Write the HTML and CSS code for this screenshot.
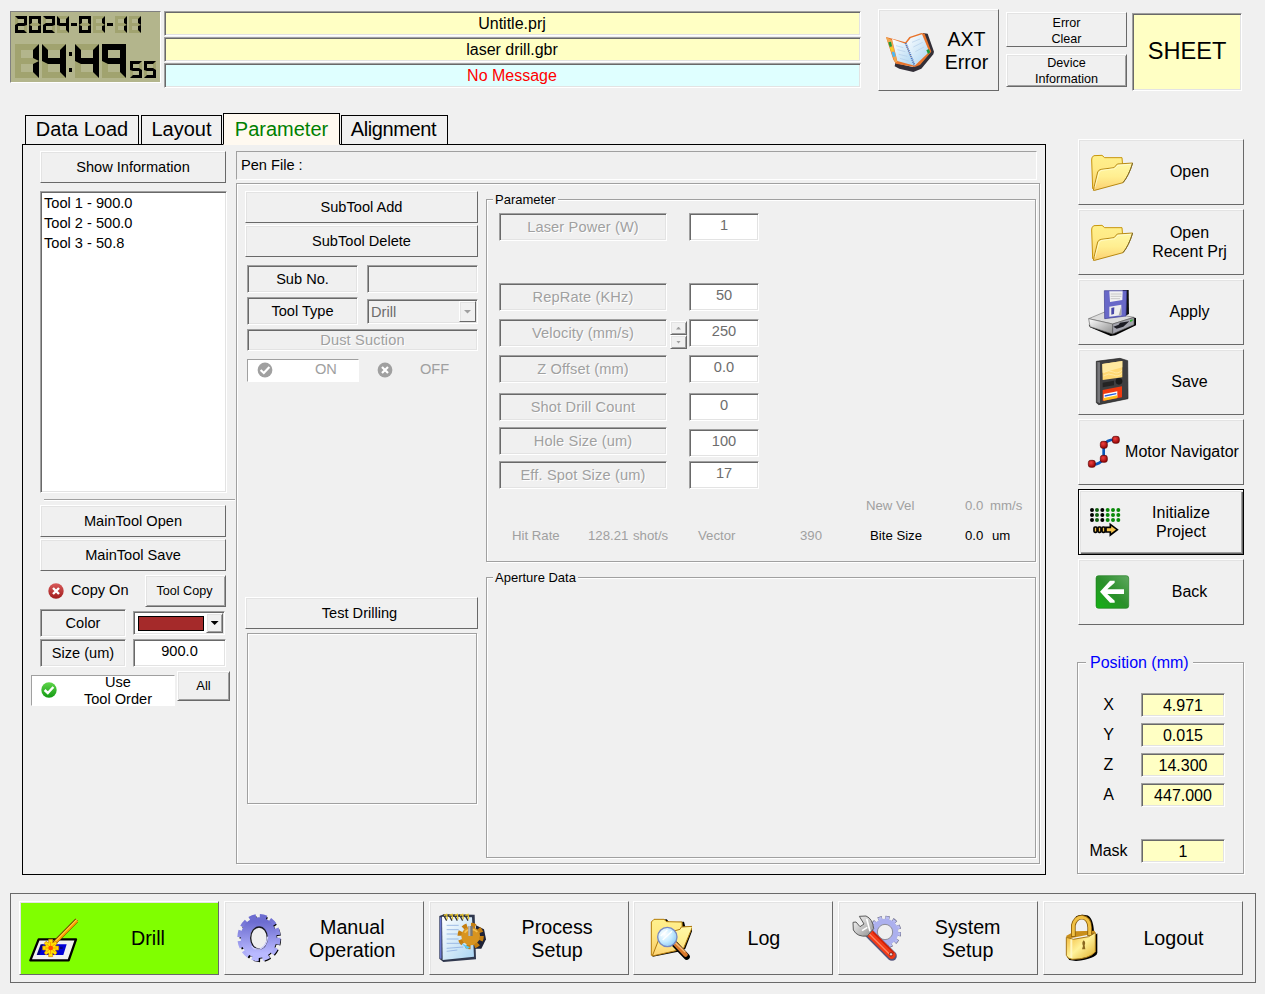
FILE: index.html
```html
<!DOCTYPE html>
<html lang="en">
<head>
<meta charset="utf-8">
<title>Laser Drill</title>
<link rel="stylesheet" href="styles.css">
</head>
<body>
<svg class="defs" width="0" height="0" aria-hidden="true">
  <defs>
    <linearGradient id="folderBack" x1="0" y1="0" x2="0" y2="1"><stop offset="0" stop-color="#fff08c"/><stop offset=".4" stop-color="#ffe985"/><stop offset="1" stop-color="#f9cc66"/></linearGradient>
    <linearGradient id="folderFront" x1="0" y1="0" x2="0" y2="1"><stop offset="0" stop-color="#fff8a8"/><stop offset=".5" stop-color="#ffee90"/><stop offset="1" stop-color="#fdd070"/></linearGradient>
    <linearGradient id="gearFill" x1="0" y1="0" x2="0" y2="1"><stop offset="0" stop-color="#6c6cd0"/><stop offset="1" stop-color="#b9b9ff"/></linearGradient>
    <linearGradient id="steel" x1="0" y1="0" x2="1" y2="1"><stop offset="0" stop-color="#ffffff"/><stop offset="1" stop-color="#8c8c8c"/></linearGradient>
    <linearGradient id="gold" x1="0" y1="0" x2="1" y2="1"><stop offset="0" stop-color="#f0b02c"/><stop offset=".5" stop-color="#fff29a"/><stop offset="1" stop-color="#e0ae28"/></linearGradient>
    <linearGradient id="page" x1="0" y1="0" x2="1" y2="1"><stop offset="0" stop-color="#ffffff"/><stop offset="1" stop-color="#a9d4f2"/></linearGradient>
    <linearGradient id="green" x1="0" y1="1" x2="1" y2="0"><stop offset="0" stop-color="#12b312"/><stop offset=".5" stop-color="#2b8f2b"/><stop offset="1" stop-color="#5fa860"/></linearGradient>
    <radialGradient id="ball" cx=".4" cy=".35" r=".7"><stop offset="0" stop-color="#f04040"/><stop offset="1" stop-color="#8c0000"/></radialGradient>
    <linearGradient id="okFill" x1="0" y1="0" x2="0" y2="1"><stop offset="0" stop-color="#5fd54a"/><stop offset="1" stop-color="#139a13"/></linearGradient>
    <linearGradient id="noFill" x1="0" y1="0" x2="0" y2="1"><stop offset="0" stop-color="#d95a5a"/><stop offset="1" stop-color="#a01c1c"/></linearGradient>
    <radialGradient id="lens" cx=".35" cy=".35" r=".8"><stop offset="0" stop-color="#ffffff"/><stop offset=".5" stop-color="#c8ecff"/><stop offset="1" stop-color="#7cc0f4"/></radialGradient>
    <symbol id="folder" viewBox="27 30 171 192">
      <path d="M65 90 L66 82 L72 77 L96 76 L104 83 L156 83 L158 108 L140 160 L72 180 L68 176Z" fill="url(#folderBack)" stroke="#c8960c" stroke-width="3" stroke-linejoin="round"/>
      <path d="M70 181 L83 126 Q86 119 94 118 L132 113 L142 102 L188 99 Q176 138 159 158 L74 181Z" fill="url(#folderFront)" stroke="#b88a14" stroke-width="3" stroke-linejoin="round"/>
      <path d="M159 158 Q176 138 188 99" fill="none" stroke="#7c6a30" stroke-width="3"/>
      <path d="M75 172 L87 128 Q90 122 96 121 L134 116 L144 106 L182 103" fill="none" stroke="#fffde0" stroke-width="2"/>
    </symbol>
  </defs>
</svg>

<div class="app">
  <header class="top">
    <div class="clock" role="timer" aria-label="2024-01-11 14:49:55">
      <div class="lcd lcd-small" data-value="2024-01-11"></div>
      <div class="clock-time">
        <div class="lcd lcd-large" data-value="14:49"></div>
        <div class="lcd lcd-small" data-value="55"></div>
      </div>
    </div>
    <div class="messages">
      <div class="message sunken">Untitle.prj</div>
      <div class="message sunken">laser drill.gbr</div>
      <div class="message message-info sunken">No Message</div>
    </div>
    <button class="btn raised axt">
      <svg class="icon" width="58" height="80" viewBox="57 30 174 240">
        <path d="M188 96 L203 98 L222 152 L220 160 L184 203 L160 213 L118 203 L104 196 L106 186 L158 198 L206 158Z" fill="#332f38"/>
        <path d="M78 108 L92 112 L136 124 L148 108 L184 96 L194 98 L214 152 L180 192 L164 198 L108 188 L100 176Z" fill="#e8742c"/>
        <path d="M78 108 L96 118 L112 184 L104 182Z" fill="#f0a850"/>
        <path d="M96 114 L136 128 L164 194 L112 180Z" fill="url(#page)"/>
        <path d="M138 128 L152 111 L186 100 L208 152 L164 194Z" fill="url(#page)"/>
        <path d="M137 126 L164 194" stroke="#3f74c8" stroke-width="6" stroke-dasharray="3 3"/>
        <path d="M108 134 L130 140 M112 146 L136 152 M116 160 L142 166 M120 172 L146 180 M156 124 L180 114 M160 138 L188 124 M166 152 L192 138" stroke="#b4cde8" stroke-width="2"/>
        <path d="M85 124 L93 122 L96 136 L89 138Z" fill="#1e9a38"/><path d="M90 140 L98 138 L101 150 L94 151Z" fill="#f5d020"/><path d="M95 154 L103 152 L107 166 L99 168Z" fill="#48b8f8"/><path d="M199 148 L206 144 L211 154 L204 159Z" fill="#1e9a38"/>
      </svg>
      <span class="label">AXT<br>Error</span>
    </button>
    <div class="small-buttons">
      <button class="btn raised error-clear">Error<br>Clear</button>
      <button class="btn raised deep device-info">Device<br>Information</button>
    </div>
    <div class="sheet sunken">SHEET</div>
  </header>

  <div class="middle">
    <section class="work">
      <nav class="tabs">
        <span class="tab tab-data">Data Load</span>
        <span class="tab tab-layout">Layout</span>
        <span class="tab tab-active">Parameter</span>
        <span class="tab tab-align">Alignment</span>
      </nav>
      <div class="panel">
        <div class="tools">
          <button class="btn raised show-info">Show Information</button>
          <ul class="tool-list sunken"><li>Tool 1 - 900.0</li><li>Tool 2 - 500.0</li><li>Tool 3 - 50.8</li></ul>
          <hr class="rule">
          <div class="stack"><button class="btn raised">MainTool Open</button><button class="btn raised">MainTool Save</button></div>
          <div class="copy-row">
            <svg width="16" height="16" viewBox="0 0 16 16"><circle cx="8" cy="8" r="7.7" fill="url(#noFill)"/><path d="M5 5 L11 11 M11 5 L5 11" stroke="#fff" stroke-width="2.4"/></svg>
            <span>Copy On</span>
            <button class="btn raised deep tool-copy">Tool Copy</button>
          </div>
          <div class="pair pair-color">
            <div class="caption sunken">Color</div>
            <div class="combo combo-color sunken"><span class="swatch"></span><span class="drop raised deep"><i class="arrow-down"></i></span></div>
          </div>
          <div class="pair">
            <div class="caption sunken">Size (um)</div>
            <div class="edit sunken">900.0</div>
          </div>
          <div class="order-row">
            <div class="toggle order">
              <svg width="16" height="16" viewBox="0 0 16 16"><circle cx="8" cy="8" r="7.7" fill="url(#okFill)"/><path d="M3.6 8 L6.8 11 L12.4 5" fill="none" stroke="#fff" stroke-width="2.4"/></svg>
              <span>Use<br>Tool Order</span>
            </div>
            <button class="btn raised deep all">All</button>
          </div>
        </div>

        <div class="detail">
          <div class="pen-file">Pen File :</div>
          <div class="detail-box etched">
            <div class="subtool">
              <div class="stack"><button class="btn raised">SubTool Add</button><button class="btn raised">SubTool Delete</button></div>
              <div class="sub-grid">
                <div class="caption sunken">Sub No.</div><div class="edit edit-off sunken"></div>
                <div class="caption sunken">Tool Type</div>
                <div class="combo combo-type sunken"><span class="combo-text">Drill</span><span class="drop drop-off raised"><i class="arrow-down dim"></i></span></div>
                <div class="caption dust disabled sunken">Dust Suction</div>
              </div>
              <div class="on-off">
                <div class="toggle on"><svg width="16" height="16" viewBox="0 0 16 16"><circle cx="8" cy="8" r="7.4" fill="#a0a0a0"/><path d="M3.6 8 L6.8 11 L12.4 5" fill="none" stroke="#fff" stroke-width="2.2"/></svg><span>ON</span></div>
                <div class="off"><svg width="16" height="16" viewBox="0 0 16 16"><circle cx="8" cy="8" r="7.4" fill="#a0a0a0"/><path d="M5 5 L11 11 M11 5 L5 11" stroke="#fff" stroke-width="2.2"/></svg><span>OFF</span></div>
              </div>
              <button class="btn raised test">Test Drilling</button>
              <div class="test-box etched"></div>
            </div>

            <div class="groups">
              <section class="group etched group-param">
                <h2 class="legend">Parameter</h2>
                <div class="param p-power"><div class="caption disabled sunken">Laser Power (W)</div><div class="edit sunken">1</div></div>
                <div class="param p-rep"><div class="caption disabled sunken">RepRate (KHz)</div><div class="edit sunken">50</div></div>
                <div class="param p-vel"><div class="caption disabled sunken">Velocity (mm/s)</div>
                  <div class="spin"><span class="raised deep"><i class="arrow-up"></i></span><span class="raised deep"><i class="arrow-down tiny"></i></span></div>
                  <div class="edit sunken">250</div></div>
                <div class="param p-z"><div class="caption disabled sunken">Z Offset (mm)</div><div class="edit sunken">0.0</div></div>
                <div class="param p-shot"><div class="caption disabled sunken">Shot Drill Count</div><div class="edit sunken">0</div></div>
                <div class="param p-hole"><div class="caption disabled sunken">Hole Size (um)</div><div class="edit sunken">100</div></div>
                <div class="param p-spot"><div class="caption disabled sunken">Eff. Spot Size (um)</div><div class="edit sunken">17</div></div>
                <div class="stats stats-vel">
                  <span>New Vel</span><span>0.0</span><span>mm/s</span>
                </div>
                <div class="stats stats-rate">
                  <span>Hit Rate</span><span>128.21</span><span>shot/s</span><span>Vector</span><span>390</span>
                  <b>Bite Size</b><b>0.0</b><b>um</b>
                </div>
              </section>
              <section class="group etched group-aperture"><h2 class="legend">Aperture Data</h2></section>
            </div>
          </div>
        </div>
      </div>
    </section>

    <aside class="side">
      <button class="btn raised"><svg class="icon" width="57" height="64"><use href="#folder"/></svg><span class="label">Open</span></button>
      <button class="btn raised two-line"><svg class="icon" width="57" height="64"><use href="#folder"/></svg><span class="label">Open<br>Recent Prj</span></button>
      <button class="btn raised">
        <svg class="icon" width="57" height="64" viewBox="27 450 171 192">
          <path d="M56 584 L60 592 L122 618 L136 616 L198 586 L198 564 L186 562 L136 596Z" fill="#000"/>
          <path d="M158 480 L176 480 L177 552 L160 560Z" fill="#111"/>
          <path d="M56 566 L104 546 L192 562 L128 582Z" fill="#dcdcdc" stroke="#777" stroke-width="2"/>
          <path d="M56 566 L128 582 L128 612 L60 590Z" fill="url(#steel)" stroke="#666" stroke-width="2"/>
          <path d="M128 582 L192 562 L192 584 L128 612Z" fill="#a4a4ae" stroke="#555" stroke-width="2"/>
          <path d="M130 590 L146 584 L150 578 L178 574 L160 590 L140 596Z" fill="#1c1c24"/><path d="M180 570 L188 568 L188 573 L180 576Z" fill="#35b030"/>
          <path d="M103 482 L170 482 L168 558 L104 566Z" fill="#6868c8" stroke="#3c3c90" stroke-width="2"/>
          <path d="M118 484 L158 484 L157 510 L120 516Z" fill="#f2f2f2"/><path d="M122 492 H155 M122 499 H154 M122 506 H150" stroke="#b4b4b4" stroke-width="2"/>
          <path d="M118 530 L154 524 L154 556 L118 560Z" fill="#eee"/><path d="M124 534 L133 532 L132 552 L124 554Z" fill="#4848a8"/><path d="M146 556 L154 528 V556Z" fill="#aaa"/>
        </svg><span class="label">Apply</span></button>
      <button class="btn raised">
        <svg class="icon" width="57" height="64" viewBox="27 660 171 192">
          <path d="M79 694 L150 685 L173 692 L174 806 L86 824 L79 818Z" fill="#3e3e40" stroke="#222" stroke-width="2"/>
          <path d="M82 696 L90 697 L90 820 L82 816Z" fill="#77777a"/>
          <path d="M97 702 L157 693 L157 742 L98 750Z" fill="#ffd873"/><path d="M97 702 L157 693 L157 712 L98 728Z" fill="#ffe9a0"/>
          <path d="M100 728 Q116 718 130 726 T156 720 M100 738 Q116 728 130 735 T156 730" fill="none" stroke="#fff0b8" stroke-width="2"/>
          <path d="M98 758 L132 752 V766 L98 772Z" fill="#232323"/><circle cx="147" cy="754" r="10" fill="#1b1b1b"/>
          <path d="M98 780 L156 769 L156 802 L98 813Z" fill="#f03a10"/><path d="M101 792 L142 784 L142 802 L101 811Z" fill="#fff"/><path d="M104 796 L139 789 V793 L104 800Z" fill="#245ce0"/><path d="M101 804 L142 796 L142 804 L101 812Z" fill="#ffc020"/>
        </svg><span class="label">Save</span></button>
      <button class="btn raised near">
        <svg class="icon" width="44" height="64" viewBox="27 15 132 192">
          <path d="M66 148 Q88 150 101 131 M101 131 V90 M101 90 Q112 72 138 74" fill="none" stroke="#0a56b8" stroke-width="8"/>
          <g fill="url(#ball)" stroke="#5c0000" stroke-width="2"><rect x="55" y="136" width="21" height="21" rx="7"/><rect x="91" y="121" width="21" height="21" rx="7"/><rect x="91" y="79" width="21" height="21" rx="7"/><rect x="127" y="64" width="21" height="21" rx="7"/></g>
        </svg><span class="label">Motor Navigator</span></button>
      <button class="btn raised deep near focused two-line">
        <svg class="icon" width="44" height="64" viewBox="27 225 132 192">
          <g fill="none" stroke-width="12" stroke-linecap="round" stroke-dasharray="0 15">
            <path d="M66 285 V320" stroke="#000"/><path d="M81 285 V320" stroke="#116011"/><path d="M97 285 V320" stroke="#000"/>
            <path d="M113 285 V320 M129 285 V320 M145 285 V320" stroke="#0a8a0a"/>
          </g>
          <g fill="#f6c44c" stroke="#000" stroke-width="5"><rect x="72" y="336" width="9" height="16" rx="3"/><rect x="84" y="336" width="9" height="16" rx="3"/><rect x="96" y="336" width="9" height="16" rx="3"/><path d="M108 337 H121 V328 L142 344 L121 360 V351 H108Z"/></g>
        </svg><span class="label">Initialize<br>Project</span></button>
      <button class="btn raised">
        <svg class="icon" width="57" height="64" viewBox="27 435 171 192">
          <rect x="75" y="480" width="102" height="102" rx="8" fill="#fff"/><rect x="78" y="482" width="98" height="98" rx="7" fill="url(#green)" stroke="#1c781c" stroke-width="2"/>
          <path d="M90 530 L120 497 H134 V503 L112 523 H162 V537 H112 L134 557 V563 H120Z" fill="#fff"/>
        </svg><span class="label">Back</span></button>

      <section class="group etched position">
        <h2 class="legend">Position (mm)</h2>
        <div class="axis"><span>X</span><div class="readout sunken">4.971</div></div>
        <div class="axis"><span>Y</span><div class="readout sunken">0.015</div></div>
        <div class="axis"><span>Z</span><div class="readout sunken">14.300</div></div>
        <div class="axis"><span>A</span><div class="readout sunken">447.000</div></div>
        <div class="axis mask"><span>Mask</span><div class="readout sunken">1</div></div>
      </section>
    </aside>
  </div>

  <footer class="bottom">
    <button class="btn raised drill">
      <svg class="icon" width="58" height="72" viewBox="60 66 174 216">
        <path d="M116 178 H228 L206 241 H91Z" fill="#f0f0f0" stroke="#000" stroke-width="7" stroke-linejoin="round"/>
        <path d="M128 193 H200 L190 225 H114Z" fill="#0000d8"/><path d="M122 193 L130 193 L118 225 H110Z M180 200 h8 v7 h-8Z" fill="#000080"/>
        <path d="M231 120 L156 196" stroke="#5a3c00" stroke-width="13"/><path d="M231 121 L156 197" stroke="#ff9c00" stroke-width="9"/><path d="M231 118 L158 192" stroke="#ffe85a" stroke-width="3"/>
        <path d="M146 178 H158 V189 L167 184 L171 190 L166 198 H176 V210 H166 L171 219 L165 225 L158 219 V230 H146 V219 L138 225 L133 219 L138 210 H128 V198 H138 L133 190 L138 184 L146 189Z" fill="#ffe400" stroke="#d07800" stroke-width="2"/>
        <path d="M152 186 V222 M135 204 H170 M140 192 L164 216 M164 192 L140 216" stroke="#ff9600" stroke-width="3"/><circle cx="152" cy="204" r="7" fill="#ff4a00"/>
      </svg><span class="label">Drill</span></button>
    <button class="btn raised two-line">
      <svg class="icon" width="58" height="72" viewBox="675 66 174 216">
        <ellipse cx="781" cy="177" rx="55" ry="62" fill="none" stroke="#000" stroke-width="15" stroke-dasharray="18 12.7"/>
        <ellipse cx="779" cy="175" rx="42" ry="50" fill="none" stroke="#000" stroke-width="22"/>
        <ellipse cx="777" cy="173" rx="57" ry="63" fill="none" stroke="url(#gearFill)" stroke-width="16" stroke-dasharray="20 11.5"/>
        <ellipse cx="776" cy="173" rx="40" ry="47" fill="none" stroke="url(#gearFill)" stroke-width="28"/>
        <ellipse cx="777" cy="174" rx="25" ry="33" fill="#efefef" stroke="#15151f" stroke-width="4"/><path d="M755 198 Q762 210 780 207 Q800 200 803 170" fill="none" stroke="#d0d0ff" stroke-width="4"/>
      </svg><span class="label">Manual<br>Operation</span></button>
    <button class="btn raised two-line">
      <svg class="icon" width="58" height="72" viewBox="30 66 174 216">
        <path d="M58 108 L72 103 L164 104 L168 238 L70 246 L58 236Z" fill="#30384e"/>
        <path d="M66 110 L156 112 L162 230 L68 240Z" fill="url(#page)"/><path d="M62 112 V236" stroke="#6a78d0" stroke-width="5"/>
        <path d="M80 136 H116 M80 149 H116 M80 162 H112 M80 177 H116 M80 190 H122 M80 205 L130 201 M80 214 L112 210" stroke="#8fb0e0" stroke-width="2.5"/>
        <path d="M70 104 l10 18 M86 104 l10 18 M102 104 l10 18 M118 104 l10 18 M134 104 l10 18" stroke="#383838" stroke-width="4"/><path d="M72 106 l8 -3 2 15 M88 106 l8 -3 2 15 M104 106 l8 -3 2 15 M120 106 l8 -3 2 15 M136 106 l8 -3 2 15" fill="none" stroke="#e4c22c" stroke-width="4"/>
        <path d="M168 136 L192 148 L198 178 L184 206 L164 206Z" fill="#1e2236"/>
        <circle cx="152" cy="168" r="33" fill="none" stroke="#c47e10" stroke-width="13" stroke-dasharray="14 11.9"/><circle cx="152" cy="168" r="28" fill="#d89420"/><path d="M134 158 A25 25 0 0 1 172 156" fill="none" stroke="#f4c050" stroke-width="5"/>
        <path d="M145 138 H158 V168 H145Z" fill="#777"/><path d="M145 138 H151 V168 H145Z" fill="#bbb"/><path d="M124 190 L150 202 L142 208Z" fill="#5ac8f0"/>
      </svg><span class="label">Process<br>Setup</span></button>
    <button class="btn raised">
      <svg class="icon" width="58" height="72" viewBox="642 66 174 216">
        <path d="M698 230 L702 122 L740 118 L748 127 L792 125 L796 140 L822 138 L796 206 L782 214Z" fill="#000"/>
        <path d="M694 226 V126 L702 118 L732 118 L740 125 L786 126 L789 204Z" fill="url(#folderBack)" stroke="#b47c08" stroke-width="3"/>
        <path d="M697 228 L722 164 L780 148 L784 141 L818 139 L790 207Z" fill="url(#folderFront)" stroke="#b07a10" stroke-width="3"/>
        <path d="M764 192 L800 230" stroke="#000" stroke-width="19" stroke-linecap="round"/><path d="M764 190 L797 224" stroke="#d8782c" stroke-width="13" stroke-linecap="round"/><path d="M766 188 L796 217" stroke="#f5bc78" stroke-width="4"/>
        <circle cx="742" cy="171" r="29" fill="url(#lens)" stroke="#7889c0" stroke-width="4"/><path d="M722 168 L742 150 M728 180 L756 154" stroke="#fff" stroke-width="4"/>
      </svg><span class="label">Log</span></button>
    <button class="btn raised two-line system">
      <svg class="icon" width="62" height="72" viewBox="177 66 186 216">
        <circle cx="315" cy="156" r="42" fill="none" stroke="#70708c" stroke-width="14" stroke-dasharray="12 9.99"/>
        <circle cx="315" cy="156" r="42" fill="none" stroke="#b9bcf2" stroke-width="10" stroke-dasharray="10 11.99" stroke-dashoffset="-1"/>
        <circle cx="315" cy="156" r="31" fill="none" stroke="#acb0ee" stroke-width="18"/><circle cx="315" cy="156" r="23" fill="#efefef" stroke="#8a8a98" stroke-width="3"/>
        <path d="M268 160 L336 228" stroke="#54547c" stroke-width="29" stroke-linecap="round"/><path d="M270 160 L335 225" stroke="#f23a18" stroke-width="23" stroke-linecap="round"/>
        <path d="M268 162 L328 222" stroke="#ff8464" stroke-width="4"/><path d="M278 156 L342 220" stroke="#b81000" stroke-width="3"/><circle cx="333" cy="223" r="5" fill="#e9d5d5" stroke="#600" stroke-width="2"/>
        <path d="M238 109 L258 108 Q278 116 281 146 L262 168 Q232 172 220 150 L219 127 L228 126 L240 140 L252 132Z" fill="url(#steel)" stroke="#5c5c5c" stroke-width="3" stroke-linejoin="round"/>
        <path d="M260 116 L270 154 M246 152 L262 142" stroke="#fff" stroke-width="5"/>
      </svg><span class="label">System<br>Setup</span></button>
    <button class="btn raised">
      <svg class="icon" width="58" height="72" viewBox="792 66 174 216">
        <path d="M862 232 L952 160 V218 Q948 236 888 243 L868 240Z" fill="#000"/><path d="M890 114 Q904 106 922 112 Q936 120 937 166" fill="none" stroke="#000" stroke-width="11"/>
        <path d="M858 168 L884 154 L944 152 L946 160 L864 176Z" fill="#c98f1c"/>
        <path d="M880 170 V136 Q886 112 906 111 Q928 114 929 142 V168" fill="none" stroke="#8a5c08" stroke-width="14"/><path d="M880 168 V136 Q886 112 906 112 Q928 115 929 142 V166" fill="none" stroke="#f0c044" stroke-width="9"/>
        <path d="M859 172 L880 178 L926 170 L946 158 V216 Q926 238 876 238 Q862 236 859 226Z" fill="url(#gold)" stroke="#a87818" stroke-width="3"/>
        <path d="M874 178 V234" stroke="#fff6c0" stroke-width="6"/><path d="M911 181 Q918 186 914 196 L916 208 H906 L909 198 Q904 188 911 181Z" fill="#8a6820"/>
      </svg><span class="label">Logout</span></button>
  </footer>
</div>
<script src="clock.js"></script>
</body>
</html>
```

FILE: styles.css
```css
* { box-sizing: border-box; }
html, body { margin: 0; }
body {
  width: 1265px; height: 994px; overflow: hidden;
  background: #f0f0f0; color: #000;
  font: 14.6px/17px "Liberation Sans", Arial, sans-serif;
}
.defs { position: absolute; }
.app { padding: 9px 8px 0 10px; }
svg { display: block; flex: none; }

/* 3D edges */
.raised { border: 1px solid; border-color: #fff #696969 #696969 #fff; box-shadow: inset 1px 1px #e3e3e3; }
.raised.deep { box-shadow: inset 1px 1px #e3e3e3, inset -1px -1px #a0a0a0; }
.sunken { border: 1px solid; border-color: #a0a0a0 #fff #fff #a0a0a0; box-shadow: inset 1px 1px #696969, inset -1px -1px #e3e3e3; }
.etched { border: 1px solid #a0a0a0; box-shadow: inset 1px 1px #fff, 1px 1px #fff; }

.btn {
  display: flex; align-items: center; justify-content: center;
  padding: 0; margin: 0; background: #f0f0f0; color: #000;
  font: inherit; text-align: center; white-space: nowrap;
}
.label { flex: 1; }

/* header */
.top { display: flex; height: 82px; }
.clock {
  width: 151px; height: 72px; margin-top: 2px; padding: 4px 0 0 4px;
  background: #b3b58c; border: 1px solid; border-color: #808080 #fff #fff #808080;
}
.clock-time { display: flex; align-items: flex-end; gap: 4px; margin-top: 11px; }
.lcd { display: flex; }
.lcd-small { gap: 2px; --w: 12px; --h: 9px; --t: 3px; }
.lcd-large { gap: 3px; --w: 24px; --h: 17px; --t: 6px; }
.digit { width: var(--w); }
.half { height: var(--h); border: var(--t) solid #a1a36f; }
.upper { border-bottom-width: calc(var(--t) / 2); }
.lower { border-top-width: calc(var(--t) / 2); }
.lcd-small .lower { height: 8px; }
.lcd-small .upper { border-bottom-width: 2px; }
.upper.a { border-top-color: #000; }
.upper.b { border-right-color: #000; }
.upper.f { border-left-color: #000; }
.upper.g { border-bottom-color: #000; }
.lower.g { border-top-color: #000; }
.lower.c { border-right-color: #000; }
.lower.e { border-left-color: #000; }
.lower.d { border-bottom-color: #000; }
.dash { width: 6px; height: 3px; align-self: center; background: #000; }
.colon { width: 3px; height: 20px; margin-top: 8px; border: solid #000; border-width: 4px 0; }

.messages { width: 697px; margin: 2px 0 0 3px; display: flex; flex-direction: column; gap: 1px; }
.message { height: 25px; padding-right: 1px; background: #ffffc4; font-size: 16px; line-height: 23px; text-align: center; }
.message-info { background: #dfffff; color: #f00; }
.axt { width: 121px; height: 82px; margin-left: 17px; padding-top: 1px; font-size: 19.6px; line-height: 23px; }
.axt .label { padding-right: 2px; }
.small-buttons { width: 121px; margin: 3px 0 0 7px; display: flex; flex-direction: column; gap: 7px; font-size: 12.6px; line-height: 16px; }
.error-clear { height: 35px; padding-top: 2px; }
.device-info { height: 33px; padding-top: 1px; }
.sheet { width: 110px; height: 78px; margin: 4px 0 0 5px; background: #ffffc4; font-size: 23.6px; line-height: 74px; text-align: center; }

/* tabs and panel */
.middle { display: flex; height: 802px; }
.work { width: 1024px; margin: 22px 0 0 12px; }
.tabs { display: flex; align-items: flex-end; height: 32px; padding-left: 3px; margin-bottom: -1px; font-size: 20px; }
.tab { height: 30px; border: 1px solid #000; line-height: 27px; text-align: center; background: #f0f0f0; }
.tab-data { width: 114px; margin-right: 2px; }
.tab-layout { width: 81px; margin-right: 1px; }
.tab-active { width: 117px; height: 32px; margin-right: 1px; border-bottom-color: #fff9f0; background: #fff9f0; color: #008000; line-height: 31px; }
.tab-align { width: 107px; padding-right: 2px; letter-spacing: -.4px; }
.panel { display: flex; height: 731px; border: 1px solid #000; }

/* left column */
.tools { width: 213px; padding: 6px 0 0 17px; }
.tools .btn { height: 32px; }
.show-info { width: 186px; }
.tool-list { width: 187px; height: 302px; margin: 8px 0 0; padding: 1px 0 0 3px; background: #fff; list-style: none; line-height: 20px; }
.rule { width: 191px; height: 2px; margin: 6px 0 4px 4px; border: 0; border-top: 1px solid #a0a0a0; background: #fff; }
.stack { display: flex; flex-direction: column; gap: 2px; width: 186px; }
.stack .btn { height: 32px; }
.copy-row { display: flex; align-items: center; margin-top: 4px; padding-left: 8px; }
.copy-row span { width: 74px; margin-left: 7px; padding-bottom: 1px; }
.tool-copy { width: 81px; padding-right: 2px; font-size: 12.6px; }
.caption { text-align: center; height: 28px; line-height: 26px; white-space: nowrap; }
.pair { display: flex; gap: 7px; margin-top: 2px; }
.pair .caption { width: 86px; }
.edit { width: 93px; height: 28px; background: #fff; text-align: center; line-height: 23px; }
.combo { display: flex; background: #fff; padding: 1px; }
.combo-color { width: 92px; height: 24px; margin-top: 2px; }
.swatch { width: 67px; height: 15px; margin: 3px 2px 0 3px; background: #a52a2a; border: 1px solid #000; }
.drop { width: 17px; height: 20px; display: flex; align-items: center; justify-content: center; background: #f0f0f0; }
.arrow-down { flex: none; width: 8px; height: 4px; background: #000; clip-path: polygon(0 0, 100% 0, 50% 100%); }
.arrow-down.dim { background: #a0a0a0; }
.order-row { display: flex; gap: 2px; margin: 4px 0 0 -9px; }
.toggle { display: flex; align-items: center; background: #fff; border: 1px solid; border-color: #a0a0a0 #fff #fff #a0a0a0; }
.order { width: 144px; height: 31px; margin-top: 4px; padding-left: 9px; text-align: center; }
.order svg { margin-bottom: 1px; }
.order span { flex: 1; padding-left: 5px; }
.tools .all { width: 53px; height: 30px; padding-bottom: 2px; font-size: 13px; }

/* detail area */
.detail { width: 804px; }
.pen-file { width: 801px; height: 29px; margin-top: 6px; padding-left: 4px; border: 1px solid; border-color: #a0a0a0 #fff #fff #a0a0a0; line-height: 26px; }
.detail-box { display: flex; height: 681px; margin-top: 3px; }
.subtool { width: 249px; padding: 7px 0 0 8px; }
.subtool .stack { width: 233px; }
.sub-grid { display: grid; grid-template-columns: 111px 111px; gap: 3px 9px; margin: 8px 0 0 2px; grid-template-rows: 29px 29px 23px; }
.sub-grid .edit { width: 111px; background: #f0f0f0; }
.combo-type { width: 111px; height: 25px; margin-top: 2px; background: #f0f0f0; }
.combo-text { flex: 1; padding-left: 2px; color: #6d6d6d; line-height: 22px; }
.drop-off { width: 17px; height: 21px; }
.dust { grid-column: 1 / 3; height: 22px; line-height: 20px; }
.disabled { color: #a0a0a0; text-shadow: 1px 1px #fff; letter-spacing: .15px; }
.on-off { display: flex; height: 23px; margin: 7px 0 0 2px; color: #a0a0a0; }
.on { width: 112px; padding: 0 0 2px 9px; }
.on span { margin-left: 42px; }
.off { display: flex; align-items: center; margin-left: 18px; padding-bottom: 2px; }
.off span { margin-left: 27px; }
.test { width: 233px; height: 32px; margin-top: 215px; padding-right: 4px; }
.test-box { width: 230px; height: 171px; margin: 4px 0 0 2px; }

.groups { width: 550px; padding-top: 15px; }
.legend { margin: 0; font-size: 13px; font-weight: normal; line-height: 16px; background: #f0f0f0; padding: 0 2px; align-self: flex-start; }
.group { display: flex; flex-direction: column; }
.group-param { height: 363px; }
.group-param .legend, .group-aperture .legend { margin: -8px 0 0 6px; }
.group-aperture { height: 281px; margin-top: 15px; }
.param { display: flex; justify-content: space-between; width: 260px; margin-left: 12px; }
.param .caption { width: 168px; }
.param .edit { width: 70px; color: #6d6d6d; line-height: 23px; }
.group-param .p-power { margin-top: 5px; }
.p-rep { margin-top: 42px; }
.p-vel, .p-z { margin-top: 8px; }
.p-shot { margin-top: 10px; }
.p-hole { margin-top: 6px; }
.p-hole .edit { margin: 2px 0 -2px; }
.p-spot { margin-top: 6px; }
.spin { width: 17px; height: 28px; margin: 2px -17px -2px -16px; display: flex; flex-direction: column; }
.spin span { flex: 1; display: flex; align-items: center; justify-content: center; }
.arrow-up, .arrow-down.tiny { width: 5px; height: 3px; background: #a0a0a0; clip-path: polygon(0 100%, 100% 100%, 50% 0); }
.arrow-down.tiny { clip-path: polygon(0 0, 100% 0, 50% 100%); }
.stats { display: grid; color: #a0a0a0; font-size: 13.2px; white-space: nowrap; }
.stats b { font-weight: normal; color: #000; }
.stats-vel { grid-template-columns: 99px 25px 40px; margin: 8px 0 0 379px; }
.stats-rate { grid-template-columns: 76px 45px 65px 102px 70px 95px 27px 30px; margin: 13px 0 0 25px; }

/* right column */
.side { width: 167px; margin: 48px 0 0 31px; font-size: 16px; line-height: 19px; }
.side .btn { width: 166px; height: 66px; margin: 0 0 4px 1px; }
.side .label { padding-bottom: 2px; }
.side .two-line .label { padding-bottom: 0; }
.side .near .label { padding-right: 2px; }
.side .btn.focused { border-color: #000; box-shadow: inset 1px 1px #fff, inset 2px 2px #e3e3e3, inset -1px -1px #696969, inset -2px -2px #a0a0a0; }
.side .focused .label { padding-right: 4px; }
.position { height: 212px; margin-top: 37px; }
.position .legend { margin: -10px 0 20px 8px; padding: 0 4px; font-size: 16px; line-height: 20px; color: #00f; }
.axis { display: flex; margin-bottom: 6px; }
.axis span { width: 61px; margin-right: 2px; text-align: center; line-height: 24px; }
.readout { width: 84px; height: 24px; background: #ffffc4; line-height: 23px; text-align: center; }
.mask { margin-top: 26px; }

/* bottom bar */
.bottom {
  display: flex; justify-content: space-between; width: 1246px; height: 90px; padding: 7px 12px 0 8px;
  border: 1px solid #696969; font-size: 19.7px; line-height: 23px;
}
.bottom .btn { width: 200px; height: 74px; }
.bottom .label { padding-left: 3px; }
.bottom .two-line .label { padding: 2px 1px 0 0; }
.bottom .system .label { padding-right: 3px; }
.bottom .drill { background: #80ff00; }
.bottom .drill .label { padding: 0; }
```

FILE: clock.js
```js
// Renders seven-segment readouts: each digit is two stacked boxes whose edges are the segments.
const SEGMENTS = {
  0: 'a b c d e f', 1: 'b c', 2: 'a b d e g', 3: 'a b c d g', 4: 'b c f g',
  5: 'a c d f g', 6: 'a c d e f g', 7: 'a b c', 8: 'a b c d e f g', 9: 'a b c f g'
};
document.querySelectorAll('.lcd').forEach(function (lcd) {
  for (const ch of lcd.dataset.value) {
    const cell = document.createElement('span');
    if (ch === '-') cell.className = 'dash';
    else if (ch === ':') cell.className = 'colon';
    else {
      cell.className = 'digit';
      ['upper', 'lower'].forEach(function (part) {
        const half = document.createElement('div');
        half.className = 'half ' + part + ' ' + SEGMENTS[ch];
        cell.append(half);
      });
    }
    lcd.append(cell);
  }
});
```
